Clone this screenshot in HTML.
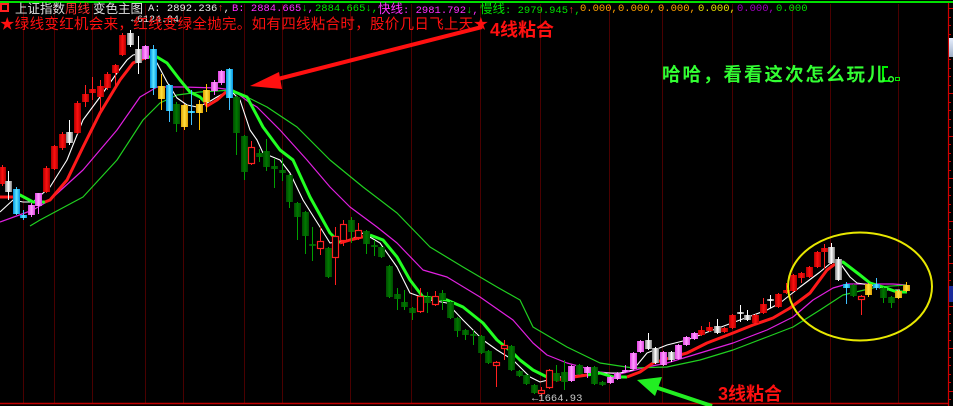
<!DOCTYPE html>
<html><head><meta charset="utf-8">
<style>
html,body{margin:0;padding:0;background:#000;width:953px;height:406px;overflow:hidden}
.t{position:absolute;white-space:nowrap;line-height:1}
.m{font-family:"Liberation Mono",monospace;font-size:10.5px}
.c{font-family:"Liberation Sans","Noto Sans CJK SC",sans-serif;font-size:12.5px}
</style></head><body>
<svg id="s" width="953" height="406" style="position:absolute;left:0;top:0" xmlns="http://www.w3.org/2000/svg">
<defs>
<linearGradient id="gr" x1="0" x2="1"><stop offset="0" stop-color="#b00000"/><stop offset=".5" stop-color="#ff1010"/><stop offset="1" stop-color="#b00000"/></linearGradient>
<linearGradient id="gg" x1="0" x2="1"><stop offset="0" stop-color="#808080"/><stop offset=".5" stop-color="#ffffff"/><stop offset="1" stop-color="#808080"/></linearGradient>
<linearGradient id="gc" x1="0" x2="1"><stop offset="0" stop-color="#0090e0"/><stop offset=".5" stop-color="#60e8ff"/><stop offset="1" stop-color="#0090e0"/></linearGradient>
<linearGradient id="gp" x1="0" x2="1"><stop offset="0" stop-color="#e040e0"/><stop offset=".5" stop-color="#ff9cff"/><stop offset="1" stop-color="#e040e0"/></linearGradient>
<linearGradient id="gy" x1="0" x2="1"><stop offset="0" stop-color="#e0a000"/><stop offset=".5" stop-color="#ffe040"/><stop offset="1" stop-color="#e0a000"/></linearGradient>
<linearGradient id="gd" x1="0" x2="1"><stop offset="0" stop-color="#004a00"/><stop offset=".5" stop-color="#007a00"/><stop offset="1" stop-color="#004a00"/></linearGradient>
<linearGradient id="gb" x1="0" x2="0" y1="0" y2="1"><stop offset="0" stop-color="#e8f0ff"/><stop offset="1" stop-color="#a0b0c8"/></linearGradient>
</defs>
<g id="grid" stroke="#4a0000" stroke-width="1"></g>
<line x1="0" y1="2" x2="953" y2="2" stroke="#00e000" stroke-width="2"/>
<line x1="0" y1="403.5" x2="948" y2="403.5" stroke="#c00000" stroke-width="1.5"/>
<line x1="948.5" y1="3" x2="948.5" y2="406" stroke="#d00000" stroke-width="1.2"/>
<g id="ticks" stroke="#d00000" stroke-width="1"></g>
<rect x="949" y="38" width="4" height="19" fill="url(#gb)"/>
<rect x="949" y="286" width="4" height="16" fill="#1a2a9a"/>
<g id="lines" fill="none"></g>
<g id="cand"></g>
<ellipse cx="860" cy="286.5" rx="72" ry="54" fill="none" stroke="#e8e800" stroke-width="2"/>
<!-- red arrow -->
<line x1="482" y1="27" x2="270" y2="81" stroke="#ff1010" stroke-width="4"/>
<polygon points="250,86 279,72 282,89" fill="#ff1010"/>
<!-- green arrow -->
<line x1="712" y1="406" x2="655" y2="387" stroke="#22ee22" stroke-width="4"/>
<polygon points="637,380 662,377 655,396" fill="#22ee22"/>
<!-- small icon -->
<path d="M888,67 H883 V81 H889" stroke="#00ee00" stroke-width="2" fill="none"/>
<rect x="895.5" y="77.5" width="4" height="3" stroke="#00ee00" fill="none"/>
<rect x="1" y="4" width="7" height="7" fill="none" stroke="#ff2020" stroke-width="2"/>
<text x="131" y="22" font-family="Liberation Mono,monospace" font-size="10" fill="#e0e0e0">←6124.04</text>
<text x="532" y="401" font-family="Liberation Mono,monospace" font-size="10.5" fill="#c8c8c8">←1664.93</text>
</svg>

<div class="t c" style="left:15px;top:3px;color:#e0e0e0">上证指数</div>
<div class="t c" style="left:65px;top:3px;color:#ff3030">周线</div>
<div class="t c" style="left:93px;top:3px;color:#e0e0e0">变色主图</div>
<div class="t m" style="left:148px;top:4px;color:#e8e8e8">A: 2892.236<span style="color:#ff3030">↑</span>,</div>
<div class="t m" style="left:232px;top:4px;color:#ff30ff">B: 2884.665<span style="color:#00e000">↓</span>,</div>
<div class="t m" style="left:315px;top:4px;color:#00e000">2884.665↓,</div>
<div class="t m" style="left:378px;top:3px;color:#ff30ff"><span class="c" style="font-size:12.5px">快线</span>: 2981.792<span style="color:#00e000">↓</span>,</div>
<div class="t m" style="left:480px;top:3px;color:#00e000"><span class="c" style="font-size:12.5px">慢线</span>: 2979.945<span style="color:#ff3030">↑</span>,</div>
<div class="t m" style="left:580px;top:4px;color:#ffa000">0.000,</div>
<div class="t m" style="left:618px;top:4px;color:#ffa000">0.000,</div>
<div class="t m" style="left:658px;top:4px;color:#ffa000">0.000,</div>
<div class="t m" style="left:698px;top:4px;color:#e8e000">0.000,</div>
<div class="t m" style="left:737px;top:4px;color:#a000c0">0.000,</div>
<div class="t m" style="left:776px;top:4px;color:#00e000">0.000</div>

<div class="t" style="left:0;top:18px;color:#ff1010;font-family:'Liberation Sans','Noto Sans CJK SC',sans-serif;font-size:14.5px;letter-spacing:0.3px">★绿线变红机会来，红线变绿全抛完。如有四线粘合时，股价几日飞上天★</div>
<div class="t" style="left:490px;top:21px;color:#ff1010;font-family:'Liberation Sans','Noto Sans CJK SC',sans-serif;font-size:18px;font-weight:bold">4线粘合</div>
<div class="t" style="left:662px;top:66px;color:#33ff33;font-family:'Liberation Sans','Noto Sans CJK SC',sans-serif;font-size:18.5px;font-weight:bold;letter-spacing:2px">哈哈，看看这次怎么玩儿。</div>
<div class="t" style="left:718px;top:385px;color:#ff1010;font-family:'Liberation Sans','Noto Sans CJK SC',sans-serif;font-size:18px;font-weight:bold">3线粘合</div>

<script>
var NS="http://www.w3.org/2000/svg";
function el(p,n,a){var e=document.createElementNS(NS,n);for(var k in a)e.setAttribute(k,a[k]);p.appendChild(e);return e;}
var grid=document.getElementById('grid');
[23,54,92,145,183,244,282,350,411,480,540,609,662,732,792,830,898].forEach(function(x){el(grid,'line',{x1:x+.5,y1:4,x2:x+.5,y2:403});});
var tk=document.getElementById('ticks');
for(var y=8,i=0;y<403;y+=8.5,i++){el(tk,'line',{x1:949,y1:Math.round(y)+.5,x2:(i%5==0?953:951),y2:Math.round(y)+.5});}
var L=document.getElementById('lines');
function pl(pts,c,w){el(L,'polyline',{points:pts,stroke:c,'stroke-width':w,'stroke-linejoin':'round'});}
pl("0,222 33,210 50,200 83,170 117,130 140,97 157,87 183,87 217,88 233,90 250,103 257,107 280,130 307,160 330,187 350,207 377,227 397,243 423,270 447,277 480,297 513,320 533,343 547,355 567,363 600,372 620,374 647,367 667,363 700,353 733,343 767,330 793,317 813,300 833,288 847,284 893,284 907,285","#e020e0",1.2);
pl("30,226 40,220 83,197 117,160 143,120 160,103 177,95 200,92 233,90 267,107 297,127 330,160 363,187 397,213 430,247 463,267 497,287 520,300 533,327 567,347 600,363 633,368 667,367 700,360 733,350 767,337 793,327 820,310 843,295 877,287 907,285","#20d020",1.2);
pl("0,212 13,200 23,202 33,202 50,187 67,160 83,120 100,97 117,73 127,60 133,55 143,53 157,63 167,82 177,98 187,105 197,107 207,103 217,97 230,90 240,100 250,130 257,140 263,153 280,160 290,173 303,200 320,227 330,243 350,240 363,233 380,243 397,267 410,293 430,300 447,303 463,320 483,340 497,350 513,360 530,377 540,382 560,377 580,375 600,373 620,373 633,370 647,353 667,345 687,340 713,330 740,320 767,310 780,303 800,287 820,272 832,262 840,263 850,277 857,283 870,285 887,290 900,290","#ffffff",1.1);
var R="#ff1a1a",G="#22ff22";
pl("0,197 15,197",R,3);
pl("15,196 20,195 33,202 45,202",G,3);
pl("45,202 50,200 67,180 83,147 100,113 120,80 133,63 147,57",R,3);
pl("147,57 157,57 167,63 180,80 190,92 200,97 205,102",G,3);
pl("205,102 207,106 217,100 226,92",R,3);
pl("226,92 230,90 247,97 263,127 280,150 293,160 310,197 330,233 340,243",G,3);
pl("340,243 350,240 370,235",R,3);
pl("370,235 383,240 397,257 410,280 423,297 447,300 463,307 483,323 497,340 513,353 520,360 533,370 547,377 557,380",G,3);
pl("557,380 567,378 587,375",R,3);
pl("587,375 600,373 613,377 627,377",G,3);
pl("627,377 640,372 653,363 673,357 687,353 707,343 733,333 753,325 773,318 790,308 810,293 827,270 835,264",R,3);
pl("835,264 843,262 860,275 870,283 883,287 897,292 907,292",G,3);
var c=[
[2,'r',167,184,165,186],[8,'g',181,192,171,200],[16,'c',189,214,187,215],[23,'c',215,218,210,220],[31,'p',205,215,203,217],[38,'p',193,206,193,214],[46,'r',168,192,166,193],[54,'r',146,169,145,170],[62,'r',134,148,132,150],[69,'g',132,143,120,145],[77,'r',103,133,101,134],[85,'r',94,102,85,107],[92,'r',89,93,77,100],[100,'r',86,97,80,110],[107,'r',74,88,72,90],[115,'r',65,73,64,86],[122,'r',35,55,33,56],[130,'g',33,45,30,47],[138,'g',49,63,36,74],[145,'p',46,59,45,60],[153,'c',49,88,45,95],[161,'y',86,99,74,110],[169,'c',85,111,84,122],[176,'d',104,124,102,132],[184,'y',105,127,104,130],[191,'c',111,113,90,125],[199,'y',104,113,100,130],[206,'y',90,102,84,112],[214,'p',82,91,80,95],[221,'p',71,83,70,85],[229,'c',69,98,68,110],[236,'d',97,133,96,155],[244,'d',136,172,135,180],[251,'h',147,164,141,165],[259,'d',153,157,149,162],[266,'d',151,167,139,171],[274,'d',166,169,158,188],[282,'d',170,173,158,181],[289,'d',175,202,174,208],[297,'d',203,217,202,240],[305,'d',212,236,211,254],[312,'d',244,246,227,261],[320,'h',241,249,227,255],[328,'d',248,277,247,278],[335,'h',236,258,227,285],[343,'h',224,241,220,246],[351,'d',220,232,217,243],[358,'h',230,238,223,240],[366,'d',231,244,230,254],[374,'d',245,247,240,256],[381,'d',247,257,246,258],[389,'d',266,297,265,298],[397,'d',294,299,288,310],[404,'d',302,307,290,310],[412,'d',308,313,307,320],[420,'h',296,312,288,313],[427,'d',297,303,292,313],[435,'h',296,305,291,306],[442,'d',293,300,290,310],[450,'d',302,318,301,319],[457,'d',318,331,317,337],[465,'d',330,335,329,340],[473,'d',334,336,330,345],[481,'d',336,353,335,354],[488,'d',351,363,350,364],[496,'h',362,366,361,387],[504,'h',345,349,340,360],[511,'d',346,370,345,371],[519,'d',371,376,370,377],[526,'d',375,384,374,385],[534,'d',385,393,384,394],[541,'h',390,394,387,396],[549,'h',370,388,369,389],[556,'d',373,381,365,382],[564,'d',372,382,360,390],[571,'p',366,381,365,382],[579,'d',365,374,364,375],[587,'p',367,373,366,378],[594,'d',367,384,366,385],[602,'d',382,385,381,386],[610,'p',377,383,376,384],[617,'p',373,379,372,380],[625,'p',370,372,365,373],[633,'p',353,369,352,370],[640,'p',341,352,340,353],[648,'g',340,349,333,350],[655,'g',348,363,347,364],[663,'p',352,365,351,366],[671,'g',352,360,351,362],[678,'p',345,359,344,360],[686,'p',337,345,336,346],[694,'p',333,339,332,340],[701,'r',330,335,326,336],[709,'r',327,331,322,332],[717,'g',326,333,319,334],[724,'r',328,332,327,333],[732,'r',315,328,314,329],[740,'g',312,314,305,322],[747,'g',315,320,310,321],[755,'r',315,323,314,324],[763,'r',304,313,298,314],[770,'g',299,301,295,308],[778,'r',294,307,293,308],[786,'r',290,293,283,294],[793,'r',275,291,274,292],[801,'r',273,278,272,283],[809,'r',267,277,266,278],[817,'r',252,267,251,268],[824,'r',248,252,244,269],[831,'g',247,263,243,264],[838,'g',259,280,257,281],[846,'c',284,288,282,304],[853,'d',285,296,284,297],[861,'h',296,300,295,315],[868,'y',284,295,283,297],[876,'c',284,288,278,290],[883,'d',288,298,287,303],[891,'d',297,303,296,308],[898,'y',291,298,290,299],[906,'y',285,291,282,292]];
var fills={r:'url(#gr)',g:'url(#gg)',c:'url(#gc)',p:'url(#gp)',y:'url(#gy)',d:'url(#gd)'};
var wc={r:'#ff2020',g:'#ffffff',c:'#40c0ff',p:'#ff60ff',y:'#ffc000',d:'#00a000',h:'#ff2020'};
var C=document.getElementById('cand');
c.forEach(function(k){
 var x=k[0],t=k[2],b=k[3];
 el(C,'line',{x1:x+.5,y1:k[4],x2:x+.5,y2:k[5],stroke:wc[k[1]],'stroke-width':1});
 if(b-t<2)b=t+2;
 if(k[1]=='h'){el(C,'rect',{x:x-2.5,y:t+.5,width:6,height:b-t-1,fill:'#000',stroke:'#ff2020','stroke-width':1.2});}
 else{el(C,'rect',{x:x-3,y:t,width:7,height:b-t,fill:fills[k[1]]});}
});
</script>
</body></html>
